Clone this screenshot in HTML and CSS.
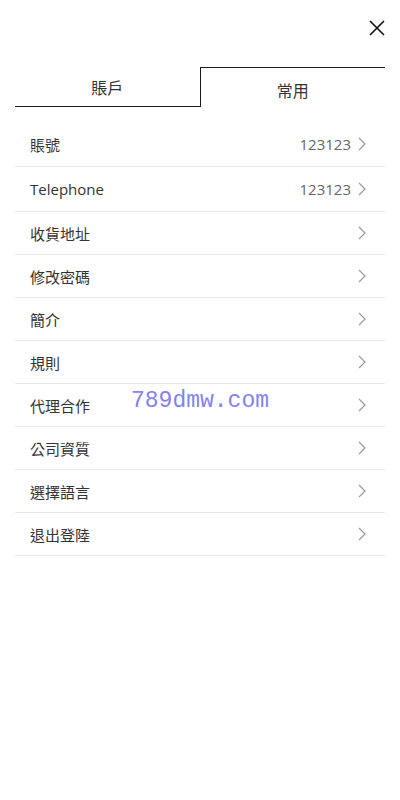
FILE: index.html
```html
<!DOCTYPE html>
<html lang="zh-Hant">
<head>
<meta charset="utf-8">
<title>常用</title>
<link rel="stylesheet" href="styles.css">
</head>
<body>
<div class="page">
  <div class="top">
    <button class="close" aria-label="close">
      <svg width="16" height="16" viewBox="0 0 16 16"><path d="M1 1L15 15M15 1L1 15" stroke="#111" stroke-width="1.6" fill="none"/></svg>
    </button>
  </div>
  <div class="tabs">
    <div class="tab">賬戶</div>
    <div class="tab active">常用</div>
  </div>
  <ul class="list">
    <li class="row tall"><span class="label">賬號</span><span class="right"><span class="value">123123</span><svg class="chev" width="8" height="14" viewBox="0 0 8 14"><path d="M1 1L7 7L1 13" stroke="#9a9a9a" stroke-width="1.2" fill="none"/></svg></span></li>
    <li class="row tall"><span class="label">Telephone</span><span class="right"><span class="value">123123</span><svg class="chev" width="8" height="14" viewBox="0 0 8 14"><path d="M1 1L7 7L1 13" stroke="#9a9a9a" stroke-width="1.2" fill="none"/></svg></span></li>
    <li class="row"><span class="label">收貨地址</span><span class="right"><svg class="chev" width="8" height="14" viewBox="0 0 8 14"><path d="M1 1L7 7L1 13" stroke="#9a9a9a" stroke-width="1.2" fill="none"/></svg></span></li>
    <li class="row"><span class="label">修改密碼</span><span class="right"><svg class="chev" width="8" height="14" viewBox="0 0 8 14"><path d="M1 1L7 7L1 13" stroke="#9a9a9a" stroke-width="1.2" fill="none"/></svg></span></li>
    <li class="row"><span class="label">簡介</span><span class="right"><svg class="chev" width="8" height="14" viewBox="0 0 8 14"><path d="M1 1L7 7L1 13" stroke="#9a9a9a" stroke-width="1.2" fill="none"/></svg></span></li>
    <li class="row"><span class="label">規則</span><span class="right"><svg class="chev" width="8" height="14" viewBox="0 0 8 14"><path d="M1 1L7 7L1 13" stroke="#9a9a9a" stroke-width="1.2" fill="none"/></svg></span></li>
    <li class="row"><span class="label">代理合作</span><span class="right"><svg class="chev" width="8" height="14" viewBox="0 0 8 14"><path d="M1 1L7 7L1 13" stroke="#9a9a9a" stroke-width="1.2" fill="none"/></svg></span></li>
    <li class="row"><span class="label">公司資質</span><span class="right"><svg class="chev" width="8" height="14" viewBox="0 0 8 14"><path d="M1 1L7 7L1 13" stroke="#9a9a9a" stroke-width="1.2" fill="none"/></svg></span></li>
    <li class="row"><span class="label">選擇語言</span><span class="right"><svg class="chev" width="8" height="14" viewBox="0 0 8 14"><path d="M1 1L7 7L1 13" stroke="#9a9a9a" stroke-width="1.2" fill="none"/></svg></span></li>
    <li class="row"><span class="label">退出登陸</span><span class="right"><svg class="chev" width="8" height="14" viewBox="0 0 8 14"><path d="M1 1L7 7L1 13" stroke="#9a9a9a" stroke-width="1.2" fill="none"/></svg></span></li>
  </ul>
  <div class="watermark">789dmw.com</div>
</div>
</body>
</html>
```
FILE: styles.css
```css
* { box-sizing: border-box; }
html, body { margin: 0; padding: 0; background: #fff; }
body {
  font-family: "Open Sans", "Noto Sans CJK TC", sans-serif;
  color: #333;
  width: 400px;
  height: 800px;
  overflow: hidden;
}
.page {
  position: relative;
  padding: 0 15px;
}
.top {
  height: 67px;
  display: flex;
  justify-content: flex-end;
  align-items: flex-start;
  padding-top: 20px;
}
.close {
  border: 0;
  background: none;
  padding: 0;
  width: 16px;
  height: 16px;
  display: block;
}
.close svg { display: block; }
.tabs {
  display: flex;
  height: 40px;
}
.tab {
  flex: 1;
  display: flex;
  align-items: center;
  justify-content: center;
  font-size: 16px;
  color: #333;
  font-family: "Noto Sans CJK TC", sans-serif;
  border-bottom: 1.5px solid #1a1a1a;
  padding-top: 0;
}
.tab.active {
  border-bottom: 0;
  border-top: 1.5px solid #1a1a1a;
  border-left: 1.5px solid #1a1a1a;
  padding-top: 4px;
}
.list {
  list-style: none;
  margin: 15px 0 0;
  padding: 0;
}
.row {
  height: 43px;
  display: flex;
  align-items: center;
  justify-content: space-between;
  padding: 0 19px 0 15px;
  border-bottom: 1px solid #e8e8e8;
  font-size: 15px;
}
.row.tall { height: 45px; }
.label { color: #333; }
.right {
  display: flex;
  align-items: center;
  gap: 7px;
}
.value {
  color: #666;
  font-size: 15px;
}
.chev { display: block; }
.watermark {
  position: absolute;
  left: 131px;
  top: 386px;
  font-family: "Liberation Mono", monospace;
  font-size: 23px;
  color: #8383ee;
  line-height: 30px;
}
```
